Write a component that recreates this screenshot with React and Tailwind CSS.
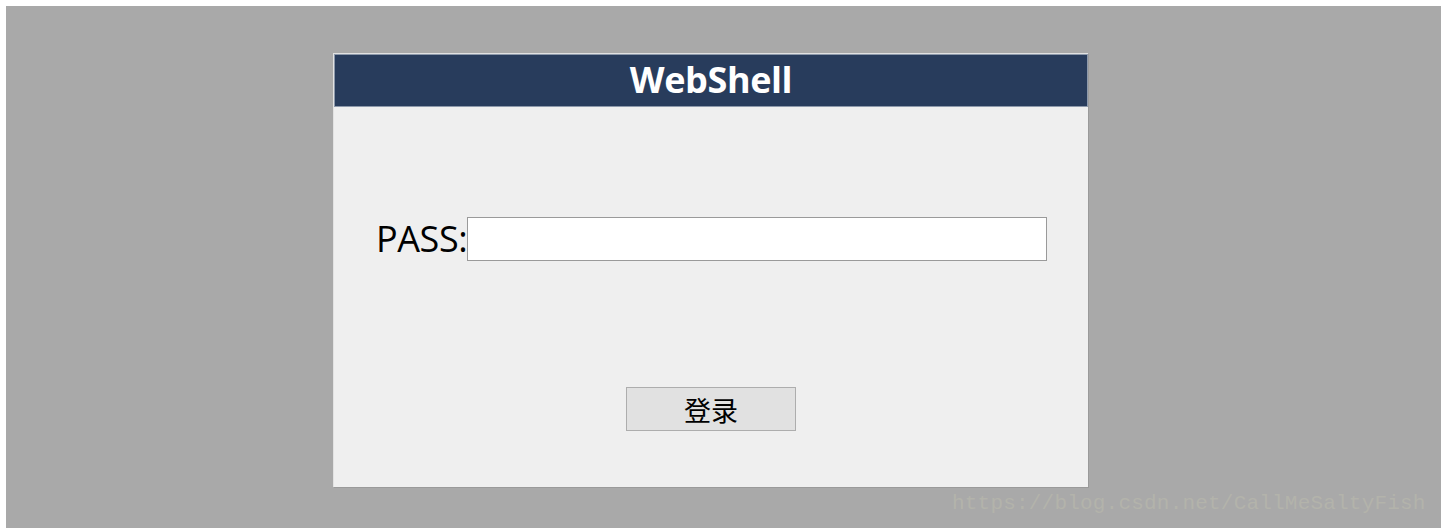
export default function App() {
  return (
    <div className="bg-white pt-[6px] pl-[6px] pr-[11px] w-[1452px] h-[528px]">
      <div className="bg-[#a9a9a9] h-[522px] flex flex-col relative">
        {/* login card */}
        <div className="ml-[327px] mt-[47px] w-[755px] h-[434px] bg-[#efefef] border-t border-l border-[#e2e2e2] shadow-[1px_1px_0_#9a9a9a] flex flex-col">
          <div className="h-[53px] bg-[#283c5c] border border-[#8d99ab] flex items-center justify-center">
            <span className="text-white font-bold text-[36px] leading-none tracking-[-0.4px] font-['Open_Sans',sans-serif] -mt-[2px]">WebShell</span>
          </div>
          <div className="flex items-center ml-[42px] mt-[110px]">
            <span className="text-[36px] leading-none text-black font-['Open_Sans',sans-serif] tracking-[-0.4px]">PASS:</span>
            <input type="password" className="w-[580px] h-[44px] bg-white border border-[#9a9a9a] outline-none" />
          </div>
          <div className="flex justify-center mt-[126px]">
            <button className="w-[170px] h-[44px] bg-[#e1e1e1] border border-[#adadad] text-[27px] leading-none text-black font-['Noto_Sans_CJK_SC',sans-serif]">登录</button>
          </div>
        </div>
        {/* watermark */}
        <div className="absolute left-[946px] top-[487px] text-[21px] leading-none text-[#b3b3ab] font-['Liberation_Mono',monospace] tracking-[0.2px]">
          https://blog.csdn.net/CallMeSaltyFish
        </div>
      </div>
    </div>
  );
}
